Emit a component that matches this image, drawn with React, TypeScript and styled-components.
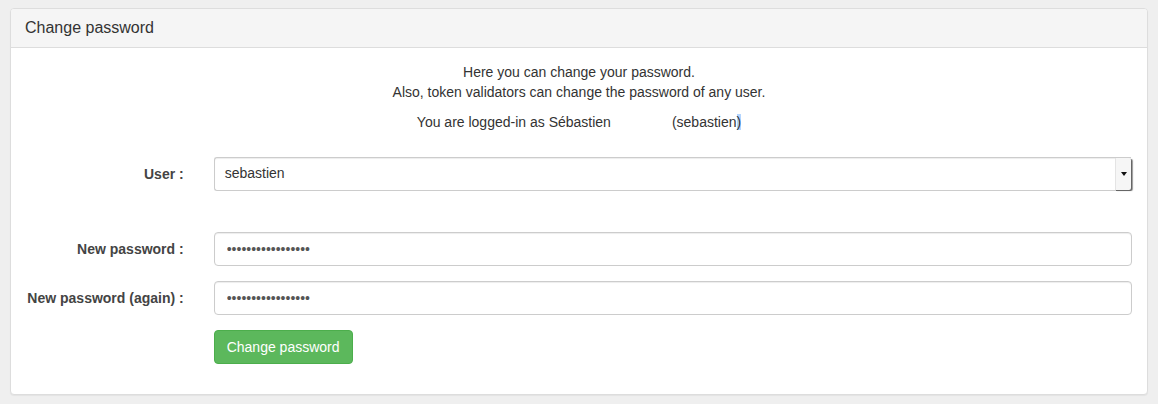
import styled, { createGlobalStyle } from "styled-components";

const GlobalStyle = createGlobalStyle`
  body {
    margin: 0;
    background: #efefef;
    font-family: "Liberation Sans", Arial, sans-serif;
    font-size: 14px;
    line-height: 1.42857;
    color: #333;
  }
`;

const Page = styled.div`
  padding: 8px 10px 10px 10px;
`;

const Panel = styled.div`
  background: #fff;
  border: 1px solid #ddd;
  border-radius: 4px;
  box-shadow: 0 1px 1px rgba(0, 0, 0, 0.05);
`;

const PanelHeading = styled.div`
  background: #f5f5f5;
  border-bottom: 1px solid #ddd;
  border-radius: 3px 3px 0 0;
  padding: 10px 14px;
`;

const PanelTitle = styled.h3`
  margin: 0;
  font-size: 16px;
  font-weight: normal;
  line-height: 1.1;
  color: #333;
`;

const PanelBody = styled.div`
  padding: 15px 15px 1px 15px;
`;

const Intro = styled.p`
  margin: 0 0 10px 0;
  text-align: center;
`;

const Spacer = styled.span`
  display: inline-block;
  width: 61px;
`;

const Selected = styled.span`
  background: #b4d5fe;
`;

const Form = styled.form`
  margin-top: 24px;
`;

const FormGroup = styled.div<{ $gap?: number }>`
  display: grid;
  grid-template-columns: 157.7px 1fr;
  column-gap: 30px;
  align-items: start;
  margin-bottom: ${(p) => p.$gap ?? 15}px;
`;

const Label = styled.label`
  text-align: right;
  font-weight: bold;
  padding-top: 8px;
  color: #444;
`;

const FieldBox = styled.div`
  height: 34px;
  box-sizing: border-box;
  border: 1px solid #ccc;
  border-radius: 4px;
  box-shadow: inset 0 1px 1px rgba(0, 0, 0, 0.075);
  background: #fff;
`;

const SelectBox = styled(FieldBox)`
  display: flex;
  align-items: stretch;
  margin-right: 1px;
  border-right: none;
  border-radius: 3px 0 0 3px;
`;

const SelectText = styled.div`
  flex: 1;
  padding: 5px 10px;
  line-height: 20px;
`;

const SelectArrow = styled.div`
  width: 15px;
  display: flex;
  align-items: center;
  justify-content: center;
  background: #f6f6f6;
  border-left: 1px solid #e4e4e4;
  box-shadow: 1px 1px 0 #666, 2px 1px 1px #999;
  border-radius: 0 2px 2px 0;
`;

const Caret = styled.span`
  width: 0;
  height: 0;
  border-left: 3px solid transparent;
  border-right: 3px solid transparent;
  border-top: 4px solid #111;
`;

const PasswordInput = styled.input`
  width: 100%;
  height: 34px;
  box-sizing: border-box;
  border: 1px solid #ccc;
  border-radius: 4px;
  box-shadow: inset 0 1px 1px rgba(0, 0, 0, 0.075);
  padding: 6px 12px;
  font-family: "Liberation Sans", Arial, sans-serif;
  font-size: 14px;
  color: #555;
  outline: none;
`;

const SubmitButton = styled.button`
  height: 34px;
  padding: 6px 12px;
  font-family: "Liberation Sans", Arial, sans-serif;
  font-size: 14px;
  line-height: 20px;
  color: #fff;
  background: #5cb85c;
  border: 1px solid #4cae4c;
  border-radius: 4px;
  cursor: pointer;
`;

const Empty = styled.div``;

export default function App() {
  return (
    <>
      <GlobalStyle />
      <Page>
        <Panel>
          <PanelHeading>
            <PanelTitle>Change password</PanelTitle>
          </PanelHeading>
          <PanelBody>
            <Intro>
              Here you can change your password.
              <br />
              Also, token validators can change the password of any user.
            </Intro>
            <Intro>
              You are logged-in as Sébastien
              <Spacer />
              (sebastien<Selected>)</Selected>
            </Intro>
            <Form onSubmit={(e) => e.preventDefault()}>
              <FormGroup $gap={41}>
                <Label>User :</Label>
                <SelectBox>
                  <SelectText>sebastien</SelectText>
                  <SelectArrow>
                    <Caret />
                  </SelectArrow>
                </SelectBox>
              </FormGroup>
              <FormGroup>
                <Label>New password :</Label>
                <PasswordInput type="password" defaultValue="aaaaaaaaaaaaaaaaa" readOnly />
              </FormGroup>
              <FormGroup>
                <Label>New password (again) :</Label>
                <PasswordInput type="password" defaultValue="aaaaaaaaaaaaaaaaa" readOnly />
              </FormGroup>
              <FormGroup $gap={29}>
                <Empty />
                <div>
                  <SubmitButton type="submit">Change password</SubmitButton>
                </div>
              </FormGroup>
            </Form>
          </PanelBody>
        </Panel>
      </Page>
    </>
  );
}
